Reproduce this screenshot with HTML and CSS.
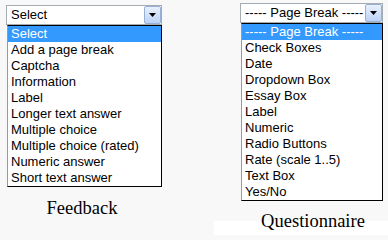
FILE: index.html
```html
<!DOCTYPE html>
<html>
<head>
<meta charset="utf-8">
<link rel="stylesheet" href="styles.css">
</head>
<body>
<div class="page">
  <div class="col col-left">
    <div class="select">
      <span class="value">Select</span>
      <div class="btn"><svg width="7" height="4" viewBox="0 0 7 4"><polygon points="0,0 7,0 3.5,4" fill="#000"/></svg></div>
    </div>
    <ul class="list">
      <li class="sel">Select</li>
      <li>Add a page break</li>
      <li>Captcha</li>
      <li>Information</li>
      <li>Label</li>
      <li>Longer text answer</li>
      <li>Multiple choice</li>
      <li>Multiple choice (rated)</li>
      <li>Numeric answer</li>
      <li>Short text answer</li>
    </ul>
    <div class="caption cap-left">Feedback</div>
  </div>
  <div class="col col-right">
    <div class="select">
      <span class="value">----- Page Break -----</span>
      <div class="btn"><svg width="7" height="4" viewBox="0 0 7 4"><polygon points="0,0 7,0 3.5,4" fill="#000"/></svg></div>
    </div>
    <ul class="list">
      <li class="sel">----- Page Break -----</li>
      <li>Check Boxes</li>
      <li>Date</li>
      <li>Dropdown Box</li>
      <li>Essay Box</li>
      <li>Label</li>
      <li>Numeric</li>
      <li>Radio Buttons</li>
      <li>Rate (scale 1..5)</li>
      <li>Text Box</li>
      <li>Yes/No</li>
    </ul>
    <div class="caption cap-right">Questionnaire</div>
  </div>
</div>
</body>
</html>
```

FILE: styles.css
```css
html, body {
  margin: 0;
  padding: 0;
  background: #f8f8f8;
}
.page {
  display: flex;
  width: 388px;
  height: 237px;
  overflow: hidden;
}
.col {
  display: flex;
  flex-direction: column;
}
.col-left {
  margin-left: 6px;
  margin-top: 5px;
  width: 156px;
}
.col-right {
  margin-left: 78px;
  margin-top: 3px;
  width: 143px;
}
.select {
  box-sizing: border-box;
  height: 20px;
  border: 1px solid #a5acb2;
  background: #fff;
  display: flex;
  align-items: center;
  justify-content: space-between;
  padding-left: 4px;
  font: 13px "Liberation Sans", Arial, sans-serif;
  color: #000;
}
.value {
  line-height: 16px;
}
.btn {
  box-sizing: border-box;
  width: 17px;
  height: 18px;
  border: 1px solid #98b0d8;
  border-radius: 2px;
  background: linear-gradient(#e8f0fd, #bcd2f5);
  display: flex;
  align-items: center;
  justify-content: center;
}
.btn svg {
  display: block;
}
.list {
  list-style: none;
  margin: 0 0 0 1px;
  padding: 0;
  border: 1px solid #000;
  border-left-color: #9a9a9a;
  background: #fff;
  font: 13px "Liberation Sans", Arial, sans-serif;
  color: #000;
}
.list li {
  height: 16px;
  line-height: 16px;
  padding-left: 3px;
  white-space: nowrap;
}
.list li.sel {
  background: #3399ff;
  color: #fff;
}
.caption {
  font: 18.5px "Liberation Serif", "Times New Roman", serif;
  color: #000;
  text-align: center;
  line-height: 21px;
}
.cap-left {
  margin-top: 11px;
  margin-right: 4px;
}
.cap-right {
  margin-top: 10px;
  margin-left: -26px;
  margin-right: -5px;
  padding-left: 24px;
  padding-bottom: 3px;
  background: linear-gradient(transparent 10px, #fff 10px);
}
```
